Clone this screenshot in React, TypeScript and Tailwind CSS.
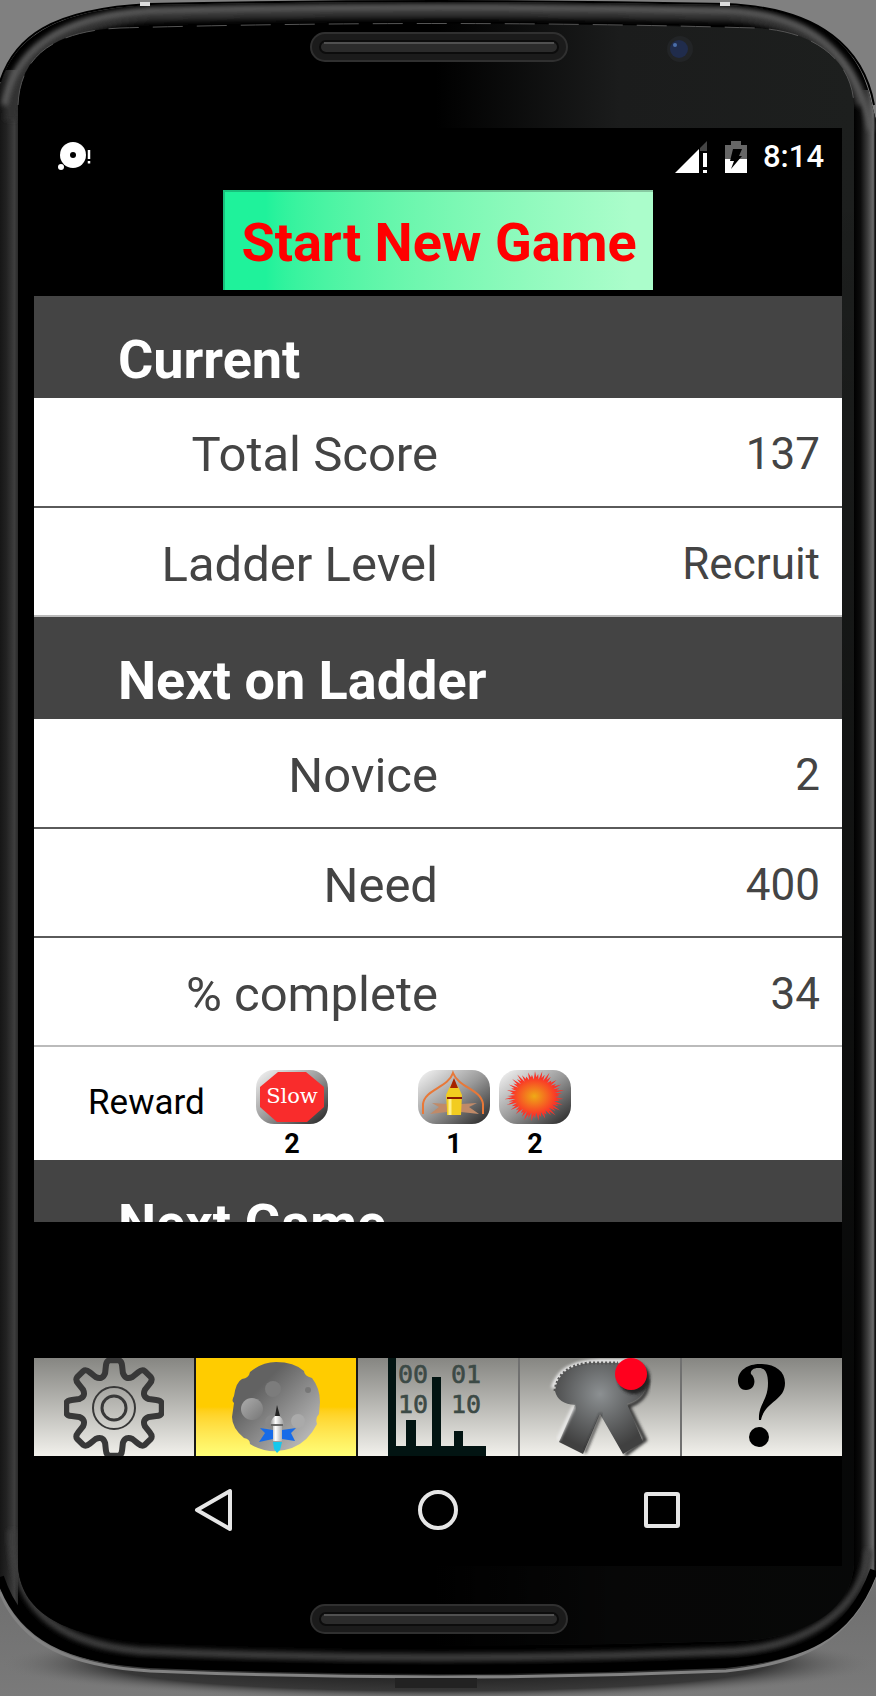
import React from "react";

const gearPath = (() => {
  const pts: string[] = [];
  const n = 8;
  for (let i = 0; i < n; i++) {
    const a = (i * 2 * Math.PI) / n - Math.PI / 2;
    const at = (d: number, r: number) =>
      `${(50 + r * Math.cos(a + d)).toFixed(1)} ${(50 + r * Math.sin(a + d)).toFixed(1)}`;
    pts.push(
      `${i === 0 ? "M" : "L"}${at(-0.25, 36)} L${at(-0.19, 43)} Q${at(-0.16, 48)} ${at(-0.09, 48)} L${at(0.09, 48)} Q${at(0.16, 48)} ${at(0.19, 43)} L${at(0.25, 36)} Q${at(0.39, 30)} ${at(0.535, 36)}`
    );
  }
  return pts.join(" ") + "Z";
})();

const burst = (() => {
  const p: string[] = [];
  for (let i = 0; i < 104; i++) {
    const a = (i * Math.PI) / 52;
    const k = i % 2 ? 0.6 + ((i * 5) % 4) * 0.04 : 0.8 + ((i * 7) % 9) * 0.026;
    p.push(`${(33 + 31 * k * Math.cos(a)).toFixed(1)},${(26 + 26 * k * Math.sin(a)).toFixed(1)}`);
  }
  return p.join(" ");
})();

function PhoneFrame() {
  return (
    <svg aria-hidden="true" className="absolute inset-0 h-full w-full" viewBox="0 0 876 1696" preserveAspectRatio="none">
      <defs>
        <linearGradient id="floor" x1="0" y1="0" x2="0" y2="1">
          <stop offset="0" stopColor="#808080" />
          <stop offset=".5" stopColor="#707070" />
          <stop offset="1" stopColor="#7a7a7a" />
        </linearGradient>
        <radialGradient id="shade">
          <stop offset="0" stopColor="#111" />
          <stop offset=".75" stopColor="#2c2c2c" stopOpacity=".85" />
          <stop offset="1" stopColor="#777" stopOpacity="0" />
        </radialGradient>
        <linearGradient id="sheen" x1="0" y1="0" x2="1" y2="0">
          <stop offset=".5" stopColor="#000" />
          <stop offset=".72" stopColor="#1b1c1c" />
          <stop offset="1" stopColor="#1d1f1e" />
        </linearGradient>
        <linearGradient id="fade" x1="0" y1="0" x2="0" y2="1">
          <stop offset=".1" stopColor="#000" stopOpacity="0" />
          <stop offset=".85" stopColor="#000" stopOpacity=".75" />
        </linearGradient>
        <linearGradient id="leftEdge" x1="0" y1="0" x2="1" y2="0">
          <stop offset="0" stopColor="#161616" />
          <stop offset=".35" stopColor="#222" />
          <stop offset=".8" stopColor="#3e3e3e" />
          <stop offset="1" stopColor="#2a2a2a" />
        </linearGradient>
        <linearGradient id="rightEdge" x1="0" y1="0" x2="1" y2="0">
          <stop offset="0" stopColor="#000" />
          <stop offset=".3" stopColor="#0c0c0c" />
          <stop offset=".6" stopColor="#3a3a3a" />
          <stop offset=".85" stopColor="#666" />
          <stop offset=".9" stopColor="#5c5c5c" />
          <stop offset=".95" stopColor="#111" />
        </linearGradient>
        <filter id="soft" x="-5%" y="-5%" width="110%" height="110%">
          <feGaussianBlur stdDeviation="2.4" />
        </filter>
        <clipPath id="body">
          <path d="M0 85C14 40 50 10 150 5Q438 -1 726 5C822 8 862 50 872 105L876 120V1575C850 1640 800 1660 726 1668Q438 1680 150 1668C70 1663 20 1640 0 1582Z" />
        </clipPath>
      </defs>
      <rect width="876" height="1696" fill="#808080" />
      <rect y="1500" width="876" height="196" fill="url(#floor)" />
      <ellipse cx="438" cy="1664" rx="440" ry="36" fill="url(#shade)" />
      <path d="M0 1592C22 1646 72 1666 150 1671Q438 1683 726 1671C805 1663 850 1640 876 1575" fill="none" stroke="#828282" strokeWidth="3" />
      <path d="M0 85C14 40 50 10 150 5Q438 -1 726 5C822 8 862 50 872 105L876 120V1575C850 1640 800 1660 726 1668Q438 1680 150 1668C70 1663 20 1640 0 1582Z" fill="#000" />
      <g clipPath="url(#body)">
        <rect y="70" width="18" height="1540" fill="url(#leftEdge)" />
        <rect x="854" y="90" width="22" height="1510" fill="url(#rightEdge)" />
        <g filter="url(#soft)" fill="none">
          <path d="M11 120C16 58 62 21 150 15Q438 8 726 15C806 20 848 54 862 105" stroke="#333" strokeWidth="13" />
          <path d="M4 105C14 52 55 16 150 10Q438 3 726 10C812 14 856 52 871 130" stroke="#5c5c5c" strokeWidth="6" />
          <path d="M12 1530C12 1600 48 1643 140 1651Q438 1664 736 1651C808 1645 862 1610 869 1550" stroke="#3c3c3c" strokeWidth="8" />
        </g>
      </g>
      <path d="M18 105C20 55 55 31 120 28Q438 19 756 28C815 31 852 60 854 105V1565C850 1615 800 1638 738 1641Q438 1650 138 1641C60 1636 20 1610 18 1565Z" fill="url(#sheen)" />
      <path d="M18 105C20 55 55 31 120 28Q438 19 756 28C815 31 852 60 854 105V1565C850 1615 800 1638 738 1641Q438 1650 138 1641C60 1636 20 1610 18 1565Z" fill="url(#fade)" />
      <path d="M18 105C20 55 55 31 120 28Q438 19 756 28C815 31 852 60 854 105" fill="none" stroke="#555" strokeDasharray="30 14" />
      <path d="M0 1577C20 1638 70 1660 150 1663Q438 1675 726 1663C800 1658 850 1638 874 1570" fill="none" stroke="#000" strokeWidth="8" />
      <path d="M0 82C14 38 50 9 150 4Q438 -2 726 4C822 8 864 50 874 105" fill="none" stroke="#000" strokeWidth="2" />
      <g fill="#ddd">
        <rect x="140" y="2" width="10" height="4" />
        <rect x="720" y="2" width="10" height="4" />
      </g>
      <rect x="395" y="1678" width="82" height="10" fill="#222" />
      {[32, 1604].map((y) => (
        <g key={y}>
          <rect x="311" y={y + 1} width="256" height="28" rx="14" fill="#1b1b1b" stroke="#303030" strokeWidth="2" />
          <rect x="320" y={y + 9} width="238" height="12" rx="6" fill="#2b2b2b" stroke="#0c0c0c" strokeWidth="2" />
          <path d={`M324 ${y + 11}H554`} stroke="#505050" strokeWidth="2" />
        </g>
      ))}
      <circle cx="680" cy="49" r="13" fill="#222426" />
      <circle cx="679" cy="49" r="9" fill="#202c4c" />
      <circle cx="675" cy="45" r="2" fill="#4a6eaa" />
    </svg>
  );
}

function StatusBar() {
  return (
    <div className="flex h-[62px] items-center justify-between pr-[18px] pb-1 pl-[22px] text-white">
      <svg aria-label="Notification" className="h-[32px] w-[40px]" viewBox="0 0 40 32">
        <circle cx="17" cy="14" r="13" fill="#fff" />
        <circle cx="17" cy="14" r="3" fill="#000" />
        <circle cx="5" cy="26" r="3" fill="#fff" />
        <path d="M33 9v9M33 20v2.500" stroke="#fff" strokeWidth="2.500" />
      </svg>
      <div className="flex items-center">
        <svg aria-label="Mobile signal" className="h-[32px] w-[32px]" viewBox="0 0 32 32">
          <path d="M24 8V32H0Z" fill="#fff" />
          <path d="M32 0V10H25V7Z" fill="#444" />
          <path d="M30 12V26M30 29V32" stroke="#fff" strokeWidth="4" />
        </svg>
        <svg aria-label="Battery charging" className="ml-[18px] h-[32px] w-[22px]" viewBox="0 0 22 32">
          <path d="M6 0H16V4H22V18H0V4H6Z" fill="#666" />
          <path d="M0 18H22V32H0Z" fill="#fff" />
          <path d="M8 8H17L14 15H17L6 28L9 20H5Z" fill="#000" />
        </svg>
        <time className="ml-4 text-[31px] leading-[32px] font-medium">8:14</time>
      </div>
    </div>
  );
}

function SectionTitle({ children }: { children: string }) {
  return (
    <h2 className="h-[102px] bg-[#444] pt-[34px] pl-[84px] text-[54px] leading-[60px] font-bold text-white">{children}</h2>
  );
}

function StatRows({ rows }: { rows: [string, string][] }) {
  return (
    <table className="w-full table-fixed border-collapse bg-white text-[#444]">
      <tbody>
        {rows.map(([label, value]) => (
          <tr key={label} className="h-[109px] border-b-2 border-[#5a5a5a] last:border-[#bbb]">
            <th scope="row" className="w-1/2 p-0 pt-[6px] text-right text-[49px] leading-[60px] font-normal">{label}</th>
            <td className="p-0 pt-1 pr-[22px] text-right text-[44px] leading-[60px]">{value}</td>
          </tr>
        ))}
      </tbody>
    </table>
  );
}

function Badge({ id, count, label, children }: { id: string; count: number; label: string; children: React.ReactNode }) {
  return (
    <figure className="flex w-[72px] flex-col items-center">
      <svg aria-label={label} className="h-[54px] w-[72px]" viewBox="-3 0 72 54">
        <defs>
          <linearGradient id={id} x1="0" y1="0" x2="1" y2="1">
            <stop offset="0" stopColor="#f8f8f8" />
            <stop offset=".5" stopColor="#999" />
            <stop offset="1" stopColor="#222" />
          </linearGradient>
        </defs>
        <rect x="-3" width="72" height="54" rx="18" fill={`url(#${id})`} />
        {children}
      </svg>
      <figcaption className="mt-[6px] text-[27px] leading-[28px] font-bold">{count}</figcaption>
    </figure>
  );
}

function RewardRow() {
  return (
    <section className="flex h-[113px] bg-white pt-[23px] pl-[54px] text-black">
      <h3 className="w-[168px] pt-[13px] text-[35px] leading-[40px]">Reward</h3>
      <div className="flex gap-[9px]">
        <Badge id="slow" label="Slow" count={2}>
          <path d="M19 2H47L65 17V37L48 52H18L1 37V17Z" fill="#f92c2c" />
          <text x="33" y="33" textAnchor="middle" fontSize="21" fill="#fff" className="font-[DejaVu_Serif,serif]">Slow</text>
        </Badge>
        <div className="w-[72px]" />
        <Badge id="ship" label="Ship" count={1}>
          <path d="M2 44V34C4 19 27 18 32 3C38 18 60 19 62 34V44" fill="none" stroke="#e87838" strokeWidth="2" />
          <path d="M26 34L11 33L18 37L9 44L26 42ZM40 34L56 33L48 37L58 44L40 42Z" fill="#c08a68" />
          <path d="M26 45V39L25 25Q28 17 33 11Q38 17 41 25L40 45Z" fill="#f2cc20" />
          <path d="M29 27V45" stroke="#fff08a" strokeWidth="3" />
          <path d="M29 18L33 8L37 18Z" fill="#a52300" />
          <path d="M26 28H41" stroke="#8b1a00" strokeWidth="2" />
        </Badge>
        <Badge id="blast" label="Blast" count={2}>
          <defs>
            <radialGradient id="fire">
              <stop offset="0" stopColor="#eeaa16" />
              <stop offset=".75" stopColor="#fa3328" />
            </radialGradient>
          </defs>
          <polygon points={burst} fill="url(#fire)" />
        </Badge>
      </div>
    </section>
  );
}

function MoonIcon() {
  return (
    <svg className="h-[98px] w-[100px]" viewBox="0 0 100 98">
      <defs>
        <linearGradient id="moon" x1="0" y1="0" x2="1" y2="1">
          <stop offset=".3" stopColor="#626262" />
          <stop offset="1" stopColor="#ccc" />
        </linearGradient>
        <linearGradient id="crater" x1="0" y1="0" x2="1" y2="1">
          <stop offset="0" stopColor="#acacac" />
          <stop offset="1" stopColor="#777" />
        </linearGradient>
        <linearGradient id="hull" x1="0" y1="0" x2="1" y2="0">
          <stop offset="0" stopColor="#888" />
          <stop offset=".4" stopColor="#fff" />
          <stop offset="1" stopColor="#999" />
        </linearGradient>
      </defs>
      <path d="M50 4Q68 4 78 13Q78 18 86 20Q94 30 94 44L93 56Q89 60 91 66Q82 84 66 90Q44 98 24 86Q24 81 18 80Q6 70 6 59L8 45Q5 43 8 38Q10 24 16 21Q23 20 24 14Q36 4 50 4Z" fill="url(#moon)" />
      <circle cx="26" cy="51" r="11" fill="url(#crater)" />
      <circle cx="47" cy="31" r="8" fill="#7c7c7c" />
      <circle cx="72" cy="63" r="7" fill="#aaa" />
      <circle cx="82" cy="32" r="3" fill="#777" />
      <circle cx="46" cy="64" r="7" fill="#888" />
      <path d="M47 72L34 70L39 75L33 84L47 81ZM56 72L70 70L65 75L69 83L56 81Z" fill="#176be8" />
      <path d="M47 83V68L44 66Q46 59 51 57Q57 59 58 66L56 68V83Z" fill="url(#hull)" />
      <path d="M49 58L51 47L54 58Z" fill="#222" />
      <path d="M45 67H57" stroke="#666" strokeWidth="2" />
      <path d="M47 84H56L54 92L51 95L48 91Z" fill="#16c8ec" />
    </svg>
  );
}

function StatsIcon() {
  return (
    <svg className="h-[98px] w-[100px]" viewBox="0 0 100 98">
      <g fill="#3c4a46" stroke="#3c4a46" strokeWidth=".6" fontSize="25" className="font-[DejaVu_Sans_Mono,monospace]">
        <text x="10" y="25">00</text>
        <text x="63" y="25">01</text>
        <text x="10" y="55">10</text>
        <text x="63" y="55">10</text>
      </g>
      <path d="M0 0H8V88H18V62H28V88H44V19H53V88H66V73H75V88H98V98H0Z" fill="#021412" />
    </svg>
  );
}

function UpgradesIcon() {
  return (
    <svg className="h-[98px] w-[100px] overflow-visible" viewBox="0 0 100 98">
      <defs>
        <radialGradient id="metal" gradientUnits="userSpaceOnUse" cx="50" cy="36" r="56">
          <stop offset="0" stopColor="#8c9092" />
          <stop offset="1" stopColor="#404040" />
        </radialGradient>
        <filter id="lift" x="-10%" y="-10%" width="120%" height="120%">
          <feGaussianBlur stdDeviation="1.500" />
        </filter>
      </defs>
      <path d="M3 30Q10 4 50 3H85" fill="none" stroke="#eee" strokeWidth="4" filter="url(#lift)" />
      <path d="M98 22Q98 42 78 48L95 82L75 97" fill="none" stroke="#333" strokeWidth="4" filter="url(#lift)" />
      <path d="M5 33Q8 8 40 5H68L97 18Q98 40 77 46L93 84L73 96L50 56L33 96L9 84L25 47Q8 46 5 33Z" fill="url(#metal)" />
      <path d="M5 33Q8 8 40 5H68" fill="none" stroke="#555" strokeWidth="3" strokeDasharray="2 2" />
      <path d="M24 48L8 82" stroke="#eee" strokeWidth="3" filter="url(#lift)" />
      <path d="M51 56L35 95" stroke="#222" strokeWidth="2" filter="url(#lift)" />
      <circle cx="84" cy="20" r="16" fill="#222" filter="url(#lift)" />
      <circle cx="81" cy="16" r="16" fill="#ff001e" />
    </svg>
  );
}

function Tab({ label, active, children }: { label: string; active?: boolean; children: React.ReactNode }) {
  return (
    <button
      type="button"
      aria-label={label}
      className={
        active
          ? "flex h-[98px] flex-1 items-center justify-center overflow-hidden bg-linear-to-b from-[#ffcc00] from-50% to-[#ffff78]"
          : "flex h-[98px] flex-1 items-center justify-center overflow-hidden bg-linear-to-b from-[#868682] to-[#f2f1ec]"
      }
    >
      {children}
    </button>
  );
}

export default function App() {
  return (
    <div className="relative min-h-screen bg-[#808080] px-[34px] pt-[128px] font-[Roboto,sans-serif]">
      <PhoneFrame />
      <main className="relative flex min-h-[1438px] flex-col bg-black">
        <StatusBar />
        <button
          type="button"
          className="mx-auto h-[100px] border-t-2 border-l-2 border-black/20 bg-linear-to-r from-[#1ff29b] from-10% to-[#abfdcb] to-95% bg-origin-border px-4 pt-1 text-[54px] leading-[60px] font-bold text-[#f00]"
        >
          Start New Game
        </button>
        <div className="mt-[6px] h-[926px] overflow-hidden">
          <SectionTitle>Current</SectionTitle>
          <StatRows rows={[["Total Score", "137"], ["Ladder Level", "Recruit"]]} />
          <SectionTitle>Next on Ladder</SectionTitle>
          <StatRows rows={[["Novice", "2"], ["Need", "400"], ["% complete", "34"]]} />
          <RewardRow />
          <SectionTitle>Next Game</SectionTitle>
        </div>
        <nav aria-label="Sections" className="mt-[136px] flex gap-[2px] bg-linear-to-r from-[#181818] from-50% to-[#707070] to-50%">
          <Tab label="Settings">
            <svg className="h-[98px] w-[100px]" viewBox="0 0 100 98" fill="none" stroke="#383838">
              <path d={gearPath} strokeWidth="6" strokeLinejoin="round" />
              <circle cx="50" cy="50" r="21" strokeWidth="2" />
              <circle cx="50" cy="50" r="12" strokeWidth="3" />
            </svg>
          </Tab>
          <Tab label="Play" active><MoonIcon /></Tab>
          <Tab label="Statistics"><StatsIcon /></Tab>
          <Tab label="Upgrades"><UpgradesIcon /></Tab>
          <Tab label="Help">
            <svg className="h-[98px] w-[50px]" viewBox="0 0 50 98">
              <path d="M22 62C21 46 31 43 31 25C31 14 27 9 21 10C16 10 13 13 14 16C20 21 18 32 9 32C3 32 1 27 1 23C1 12 11 6 23 6C38 6 48 13 48 25C48 43 28 43 24 62Z" fill="#000" />
              <circle cx="22" cy="79" r="10" fill="#000" />
            </svg>
          </Tab>
        </nav>
        <div className="flex h-[108px] items-center justify-between px-[160px]">
          <button type="button" aria-label="Back">
            <svg className="h-[44px] w-[40px]" viewBox="0 0 40 44" fill="none" stroke="#e6e6e6" strokeWidth="4" strokeLinejoin="round">
              <path d="M36 3V41L3 22Z" />
            </svg>
          </button>
          <button type="button" aria-label="Home">
            <svg className="h-[40px] w-[40px]" viewBox="0 0 40 40" fill="none" stroke="#e6e6e6" strokeWidth="4">
              <circle cx="20" cy="20" r="18" />
            </svg>
          </button>
          <button type="button" aria-label="Recent apps">
            <svg className="h-[40px] w-[40px]" viewBox="0 0 40 40" fill="none" stroke="#e6e6e6" strokeWidth="4">
              <rect x="4" y="4" width="32" height="32" rx="1" />
            </svg>
          </button>
        </div>
      </main>
    </div>
  );
}
